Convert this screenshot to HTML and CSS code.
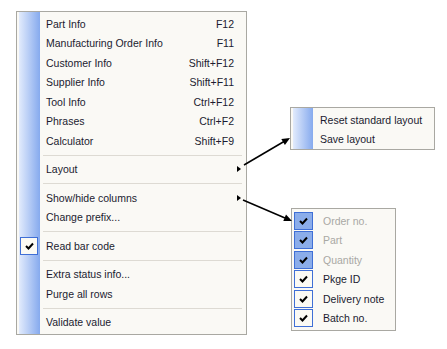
FILE: index.html
```html
<!DOCTYPE html>
<html>
    <head>
        <meta charset="utf-8">
        <title>Context menu</title>
        <link rel="stylesheet" href="styles.css">
    </head>
    <body>
        <div class="canvas">

            <!-- main popup -->
            <div class="menu main-menu">
                <div class="item"><span class="icon"></span><span class="label">Part Info</span><span class="key">F12</span><span class="sub"></span></div>
                <div class="item"><span class="icon"></span><span class="label">Manufacturing Order Info</span><span class="key">F11</span><span class="sub"></span></div>
                <div class="item"><span class="icon"></span><span class="label">Customer Info</span><span class="key">Shift+F12</span><span class="sub"></span></div>
                <div class="item"><span class="icon"></span><span class="label">Supplier Info</span><span class="key">Shift+F11</span><span class="sub"></span></div>
                <div class="item"><span class="icon"></span><span class="label">Tool Info</span><span class="key">Ctrl+F12</span><span class="sub"></span></div>
                <div class="item"><span class="icon"></span><span class="label">Phrases</span><span class="key">Ctrl+F2</span><span class="sub"></span></div>
                <div class="item"><span class="icon"></span><span class="label">Calculator</span><span class="key">Shift+F9</span><span class="sub"></span></div>
                <div class="sep"></div>
                <div class="item"><span class="icon"></span><span class="label">Layout</span><span class="key"></span><span class="sub"><i class="tri"></i></span></div>
                <div class="sep"></div>
                <div class="item"><span class="icon"></span><span class="label">Show/hide columns</span><span class="key"></span><span class="sub"><i class="tri"></i></span></div>
                <div class="item"><span class="icon"></span><span class="label">Change prefix...</span><span class="key"></span><span class="sub"></span></div>
                <div class="sep"></div>
                <div class="item">
                    <span class="icon"><span class="check-box">
                        <svg width="9" height="8" viewBox="0 0 9 8"><path d="M1 4 L3.5 6.5 L8 1.5" fill="none" stroke="#000" stroke-width="2"/></svg>
                    </span></span>
                    <span class="label">Read bar code</span><span class="key"></span><span class="sub"></span>
                </div>
                <div class="sep"></div>
                <div class="item"><span class="icon"></span><span class="label">Extra status info...</span><span class="key"></span><span class="sub"></span></div>
                <div class="item"><span class="icon"></span><span class="label">Purge all rows</span><span class="key"></span><span class="sub"></span></div>
                <div class="sep"></div>
                <div class="item"><span class="icon"></span><span class="label">Validate value</span><span class="key"></span><span class="sub"></span></div>
            </div>

            <!-- layout submenu -->
            <div class="menu layout-menu">
                <div class="item small"><span class="icon"></span><span class="label">Reset standard layout</span></div>
                <div class="item small"><span class="icon"></span><span class="label">Save layout</span></div>
            </div>

            <!-- columns submenu -->
            <div class="menu columns-menu">
                <div class="item small disabled"><span class="icon"><span class="check-box filled"><svg width="9" height="8" viewBox="0 0 9 8"><path d="M1 4 L3.5 6.5 L8 1.5" fill="none" stroke="#000" stroke-width="2"/></svg></span></span><span class="label">Order no.</span></div>
                <div class="item small disabled"><span class="icon"><span class="check-box filled"><svg width="9" height="8" viewBox="0 0 9 8"><path d="M1 4 L3.5 6.5 L8 1.5" fill="none" stroke="#000" stroke-width="2"/></svg></span></span><span class="label">Part</span></div>
                <div class="item small disabled"><span class="icon"><span class="check-box filled"><svg width="9" height="8" viewBox="0 0 9 8"><path d="M1 4 L3.5 6.5 L8 1.5" fill="none" stroke="#000" stroke-width="2"/></svg></span></span><span class="label">Quantity</span></div>
                <div class="item small"><span class="icon"><span class="check-box"><svg width="9" height="8" viewBox="0 0 9 8"><path d="M1 4 L3.5 6.5 L8 1.5" fill="none" stroke="#000" stroke-width="2"/></svg></span></span><span class="label">Pkge ID</span></div>
                <div class="item small"><span class="icon"><span class="check-box"><svg width="9" height="8" viewBox="0 0 9 8"><path d="M1 4 L3.5 6.5 L8 1.5" fill="none" stroke="#000" stroke-width="2"/></svg></span></span><span class="label">Delivery note</span></div>
                <div class="item small"><span class="icon"><span class="check-box"><svg width="9" height="8" viewBox="0 0 9 8"><path d="M1 4 L3.5 6.5 L8 1.5" fill="none" stroke="#000" stroke-width="2"/></svg></span></span><span class="label">Batch no.</span></div>
            </div>

            <!-- pointer arrows -->
            <svg class="arrows" width="447" height="349" viewBox="0 0 447 349">
                <line x1="244" y1="165" x2="284" y2="141.5" stroke="#000" stroke-width="1.5"/>
                <polygon points="290,138 284.9,145.1 281.3,139" fill="#000"/>
                <line x1="243" y1="200" x2="285" y2="218" stroke="#000" stroke-width="1.5"/>
                <polygon points="292,221 283.3,221.1 286,214.6" fill="#000"/>
            </svg>
        </div>
    </body>
</html>
```

FILE: styles.css
```css
body { margin: 0; background: #fff; }

.canvas {
    position: relative;
    width: 447px;
    height: 349px;
    font-family: "Liberation Sans", Arial, sans-serif;
    font-size: 10.5px;
    color: #1b1b30;
}

.menu {
    position: absolute;
    box-sizing: border-box;
    border: 1px solid #a9a8a2;
    padding: 2px;
    background-color: #faf9f5;
}

.main-menu {
    left: 16px;
    top: 11px;
    width: 231px;
    background-image: linear-gradient(to right, transparent 2px, #e2ebfc 2px, #86aaee 23px, transparent 23px);
}

.layout-menu {
    left: 290px;
    top: 107px;
    width: 145px;
    padding-bottom: 0;
    background-image: linear-gradient(to right, transparent 2px, #e2ebfc 2px, #86aaee 22px, transparent 22px);
}

.columns-menu {
    left: 291px;
    top: 208px;
    width: 105px;
}

.item {
    display: grid;
    grid-template-columns: 27px 1fr auto 10px;
    align-items: center;
    height: 19.5px;
    white-space: nowrap;
}
.item.small { grid-template-columns: 27px 1fr; }
.columns-menu .item { grid-template-columns: 29px 1fr; }

.icon { display: flex; align-items: center; height: 100%; }

.key { text-align: right; }

.sub { display: flex; align-items: center; padding-left: 3px; }
.tri {
    width: 0;
    height: 0;
    border-left: 4px solid #000;
    border-top: 3.5px solid transparent;
    border-bottom: 3.5px solid transparent;
}

.sep {
    height: 1px;
    margin: 4px 2px 4px 24px;
    background: #dddad3;
}

.check-box {
    box-sizing: border-box;
    width: 18px;
    height: 18px;
    margin-left: 1px;
    border: 1px solid #3f6fd6;
    background: #fbfaf4;
    display: flex;
    align-items: center;
    justify-content: center;
}
.columns-menu .check-box { width: 19px; margin-left: 0; }
.check-box.filled { background: #8badea; }

.disabled .label { color: #a9a8a4; }

.arrows {
    position: absolute;
    left: 0;
    top: 0;
    pointer-events: none;
}
```
